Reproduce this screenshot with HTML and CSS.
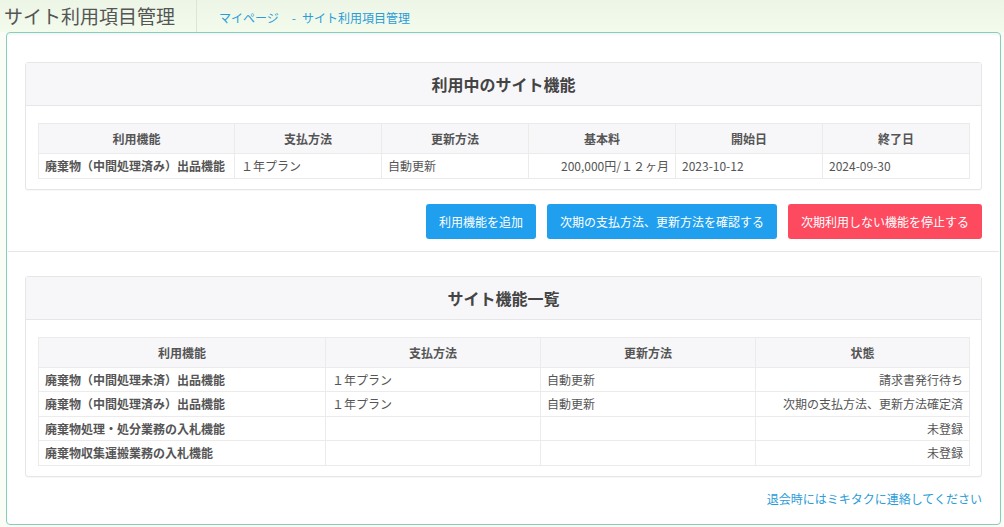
FILE: index.html
```html
<!DOCTYPE html>
<html lang="ja">
<head>
<meta charset="utf-8">
<title>サイト利用項目管理</title>
<link rel="stylesheet" href="styles.css">
</head>
<body>
<header class="topbar">
  <h1 class="page-title">サイト利用項目管理</h1>
  <nav class="crumbs"><a class="crumb" href="#">マイページ</a><span class="crumb-sep">-</span><a class="crumb" href="#">サイト利用項目管理</a></nav>
</header>
<main class="panel">
  <section class="card">
    <h2 class="card-title">利用中のサイト機能</h2>
    <div class="card-body">
      <table class="grid">
        <colgroup><col class="c1-a"><col class="c1-b"><col class="c1-b"><col class="c1-b"><col class="c1-b"><col class="c1-b"></colgroup>
        <thead>
          <tr><th>利用機能</th><th>支払方法</th><th>更新方法</th><th>基本料</th><th>開始日</th><th>終了日</th></tr>
        </thead>
        <tbody>
          <tr><td class="strong">廃棄物（中間処理済み）出品機能</td><td>１年プラン</td><td>自動更新</td><td class="num">200,000円/１２ヶ月</td><td>2023-10-12</td><td>2024-09-30</td></tr>
        </tbody>
      </table>
    </div>
  </section>
  <div class="actions">
    <button class="btn btn-blue">利用機能を追加</button>
    <button class="btn btn-blue">次期の支払方法、更新方法を確認する</button>
    <button class="btn btn-red">次期利用しない機能を停止する</button>
  </div>
  <hr class="divider">
  <section class="card">
    <h2 class="card-title">サイト機能一覧</h2>
    <div class="card-body">
      <table class="grid">
        <colgroup><col class="c2-a"><col class="c2-b"><col class="c2-b"><col class="c2-c"></colgroup>
        <thead>
          <tr><th>利用機能</th><th>支払方法</th><th>更新方法</th><th>状態</th></tr>
        </thead>
        <tbody>
          <tr><td class="strong">廃棄物（中間処理未済）出品機能</td><td>１年プラン</td><td>自動更新</td><td class="num">請求書発行待ち</td></tr>
          <tr><td class="strong">廃棄物（中間処理済み）出品機能</td><td>１年プラン</td><td>自動更新</td><td class="num">次期の支払方法、更新方法確定済</td></tr>
          <tr><td class="strong">廃棄物処理・処分業務の入札機能</td><td></td><td></td><td class="num">未登録</td></tr>
          <tr><td class="strong">廃棄物収集運搬業務の入札機能</td><td></td><td></td><td class="num">未登録</td></tr>
        </tbody>
      </table>
    </div>
  </section>
  <p class="leave-note"><a href="#" class="note-link">退会時にはミキタクに連絡してください</a></p>
</main>
</body>
</html>
```

FILE: styles.css
```css
* { box-sizing: border-box; }
html, body { margin: 0; padding: 0; }
body {
  font-family: "Noto Sans CJK JP", "Noto Sans", sans-serif;
  background: #f9fdf6;
  color: #555;
  width: 1004px;
  height: 527px;
  overflow: hidden;
}
.topbar {
  height: 32px;
  display: flex;
  align-items: stretch;
  background: linear-gradient(#ecf5e6, #f2fbec);
}
.page-title {
  margin: 0;
  padding: 0 21px 0 4px;
  font-size: 19px;
  font-weight: normal;
  color: #555;
  line-height: 31px;
  border-right: 1px solid #dce6d5;
}
.crumbs {
  display: flex;
  align-items: center;
  padding-left: 22px;
  font-size: 12px;
  padding-top: 2px;
}
.crumb { color: #2b9cd8; text-decoration: none; }
.crumb-sep { color: #2b9cd8; margin: 0 6px 0 13px; }
.panel {
  margin: 0 3px 0 6px;
  height: 493px;
  background: #fff;
  border: 1.5px solid #86cdbb;
  border-radius: 4px;
  padding: 29px 18px 0 18px;
  box-shadow: inset 0 2px 2px rgba(0,0,0,0.04);
}
.card {
  border: 1px solid #e6e6e6;
  border-radius: 3px;
  background: #fff;
  box-shadow: 0 1px 1px rgba(0,0,0,0.03);
}
.card-title {
  margin: 0;
  height: 43px;
  line-height: 42px;
  text-align: center;
  font-size: 16px;
  font-weight: bold;
  color: #444;
  background: #f7f7f9;
  border-bottom: 1px solid #e6e6e6;
}
.card-body { padding: 17px 12px 10px 12px; }
.grid {
  width: 931px;
  border-collapse: collapse;
  table-layout: fixed;
  font-size: 12px;
  color: #555;
}
.c1-a { width: 196px; }
.c1-b { width: 147px; }
.c2-a { width: 287px; }
.c2-b { width: 215px; }
.c2-c { width: 214px; }
.grid th {
  height: 30px;
  background: #f7f7f9;
  font-weight: bold;
  text-align: center;
  border: 1px solid #ebebeb;
  padding: 0 6px;
}
.grid td {
  height: 24.5px;
  border: 1px solid #ebebeb;
  padding: 0 6px;
  text-align: left;
  white-space: nowrap;
}
.grid td.strong { font-weight: bold; }
.grid td.num { text-align: right; }
.actions {
  display: flex;
  justify-content: flex-end;
  gap: 11px;
  margin-top: 14px;
}
.btn {
  height: 35px;
  padding: 0 13px;
  border: none;
  border-radius: 3px;
  font-family: inherit;
  font-size: 12px;
  color: #fff;
}
.btn-blue { background: #1f9fee; }
.btn-red { background: #fd4a5f; }
.divider {
  margin: 12px -17px 24px -17px;
  border: none;
  border-top: 1px solid #e6e6e6;
  height: 0;
}
.leave-note {
  margin: 14px 0 0 0;
  text-align: right;
  font-size: 12px;
  line-height: 16px;
}
.note-link { color: #2b9cd8; text-decoration: none; }
```
